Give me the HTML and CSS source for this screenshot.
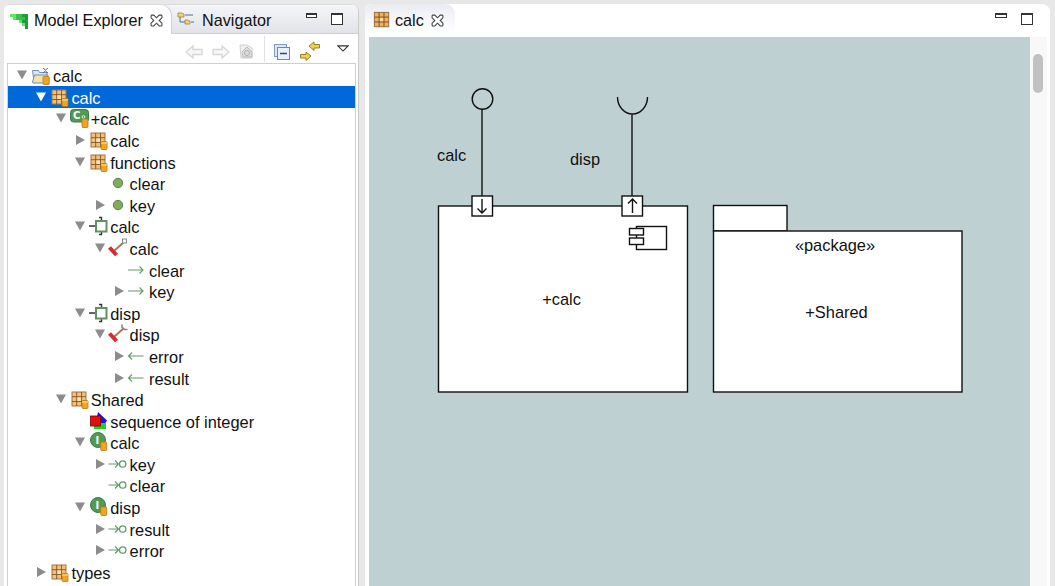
FILE: index.html
```html
<!DOCTYPE html>
<html lang="en">
<head>
<meta charset="utf-8">
<title>calc</title>
<link rel="stylesheet" href="styles.css">
</head>
<body>
<svg class="defs" width="0" height="0" aria-hidden="true">
  <defs>
    <symbol id="tri-d" viewBox="0 0 12 12"><path d="M0 1.500h10L5 10.500z" fill="#8c8c8c"/></symbol>
    <symbol id="tri-dw" viewBox="0 0 12 12"><path d="M0 1.500h10L5 10.500z" fill="#fff"/></symbol>
    <symbol id="tri-r" viewBox="0 0 12 12"><path d="M1 1v10L10 6z" fill="#8c8c8c"/></symbol>
    <symbol id="badge" viewBox="0 0 20 20"><rect x="13" y="11.500" width="6" height="8" rx="1" fill="#f2a41e" stroke="#b87810" stroke-width=".8"/><path d="M13 13h6" stroke="#ffe6a8" stroke-width="1"/></symbol>
    <symbol id="pkg" viewBox="0 0 20 20">
      <rect x="3" y="3" width="14" height="14" fill="#f4c074" stroke="#a07448" stroke-width="1"/>
      <rect x="8" y="8" width="4.200" height="4.200" fill="#fde3a8"/>
      <path d="M3 7.700h14M3 12.500h14M7.700 3v14M12.500 3v14" stroke="#7a4f2a" stroke-width="1" fill="none" opacity=".85"/>
      <use href="#badge"/>
    </symbol>
    <symbol id="pkg-plain" viewBox="0 0 20 20">
      <rect x="1.500" y="1.500" width="16" height="16" fill="#eeb25c" stroke="#96683a" stroke-width="1"/>
      <rect x="7" y="7" width="5" height="5" fill="#fbdf9e"/>
      <path d="M1.500 6.800h16M1.500 12.200h16M6.800 1.500v16M12.200 1.500v16" stroke="#7a4f2a" stroke-width="1.100" fill="none"/>
    </symbol>
    <symbol id="project" viewBox="0 0 20 20">
      <path d="M2.500 5.500h6l1 2h7.500v8.500H4z" fill="#dce6f2" stroke="#6f8fb8"/>
      <path d="M2.500 17l2-7h13.500l-2.500 8H3z" fill="#f5e3a6" stroke="#6f8fb8"/>
      <path d="M13 3l2.500 2 2.500-2M13 8l2.500-2 2.500 2" stroke="#4d6f9c" fill="none"/>
      <rect x="13" y="11.500" width="6.300" height="8" rx="1" fill="#f2a41e" stroke="#b87810" stroke-width=".8"/>
    </symbol>
    <symbol id="comp" viewBox="0 0 20 20">
      <rect x="1.500" y="1.500" width="18" height="12.500" rx="3" fill="#4f9a55" stroke="#3d7d44"/>
      <text class="ico-letter" x="4" y="11">C</text>
      <circle cx="14.500" cy="9" r="1.400" fill="none" stroke="#fff" stroke-width=".8"/>
      <rect x="13" y="11" width="6" height="8.500" rx="1" fill="#f2a41e" stroke="#b87810" stroke-width=".8"/>
    </symbol>
    <symbol id="dot" viewBox="0 0 20 20"><circle cx="10" cy="10" r="4.700" fill="#82ad56" stroke="#5c7d56" stroke-width="1"/></symbol>
    <symbol id="port" viewBox="0 0 20 20">
      <path d="M1 10h7M11 1.500h2.500v3M11 18.500h2.500v-3" stroke="#333" stroke-width="1.400" fill="none"/>
      <rect x="8" y="5" width="10.500" height="10.500" fill="#fff" stroke="#5f9163" stroke-width="2"/>
    </symbol>
    <symbol id="wrench-r" viewBox="0 0 20 20">
      <path d="M6 13L16 4" stroke="#a9795a" stroke-width="2"/>
      <rect x="14.500" y="1" width="4" height="4" fill="#fff" stroke="#888"/>
      <path d="M1.500 9.500l7 7.500" stroke="#d92c30" stroke-width="4"/>
    </symbol>
    <symbol id="wrench-d" viewBox="0 0 20 20">
      <path d="M6 13L16 4" stroke="#a9795a" stroke-width="2"/>
      <path d="M14 .5v3l2.500 2h3" stroke="#888" stroke-width="1.600" fill="none"/>
      <path d="M1.500 9.500l7 7.500" stroke="#d92c30" stroke-width="4"/>
    </symbol>
    <symbol id="arr-r" viewBox="0 0 20 20"><path d="M1 10h15M12.500 6.500L16 10l-3.500 3.500" stroke="#5f9b68" stroke-width="1.100" fill="none"/></symbol>
    <symbol id="arr-l" viewBox="0 0 20 20"><path d="M16.500 10H1.500M5 6.500L1.500 10 5 13.500" stroke="#5f9b68" stroke-width="1.100" fill="none"/></symbol>
    <symbol id="seq" viewBox="0 0 20 20">
      <path d="M10 1l9 8.500-4 6H7z" fill="#1818e0"/>
      <rect x="6" y="12" width="12" height="6" fill="#22d022"/>
      <rect x="2.500" y="5" width="10" height="10" fill="#e80c0c" stroke="#700" stroke-width=".8"/>
    </symbol>
    <symbol id="iface" viewBox="0 0 20 20">
      <circle cx="10" cy="8" r="7.500" fill="#4f9a55" stroke="#3d7d44"/>
      <text class="ico-letter" x="7.500" y="12">I</text>
      <rect x="12.700" y="10" width="6" height="8.500" rx="1" fill="#f2a41e" stroke="#b87810" stroke-width=".8"/>
    </symbol>
    <symbol id="op" viewBox="0 0 20 20"><path d="M.5 10h10M7 6.500l3.500 3.500L7 13.500" stroke="#5f9b68" stroke-width="1.100" fill="none"/><circle cx="14.700" cy="10" r="3.200" fill="#fff" stroke="#5f9b68" stroke-width="1.300"/></symbol>
  </defs>
</svg>

<section class="panel panel-left">
  <header class="tabs">
    <div class="tab tab-active">
      <svg class="tab-ico" viewBox="0 0 18 16"><path d="M0 1h6v3H0zM3 4h3v3H3zM9 7h3v3H9zM12 10h3v3h-3z" fill="#5be85b"/><path d="M6 1h6v3H6zM6 4h6v3H6zM12 4h3v3h-3z" fill="#39c24a"/><path d="M12 1h6v3h-6zM15 4h3v3h-3zM12 7h6v3h-6zM15 10h3v6h-3z" fill="#1f9a3c"/></svg>
      <span>Model Explorer</span>
      <svg class="close" viewBox="0 0 12 12"><path d="M1.500 1h2L6 3.500 8.500 1h2l.5.500v2L8.500 6 11 8.500v2l-.5.500h-2L6 8.500 3.500 11h-2l-.5-.500v-2L3.500 6 1 3.500v-2z" fill="#fff" stroke="#444" stroke-width="1"/></svg>
    </div>
    <div class="tab tab-inactive">
      <svg class="tab-ico" viewBox="0 0 18 18"><path d="M1 2h4l1 1h1v3H1z" fill="#f3d27c" stroke="#a08040" stroke-width=".8"/><path d="M8 9h3l1 1h1v3H8z" fill="#f3d27c" stroke="#a08040" stroke-width=".8"/><path d="M3 6v5h5M8 4h8M14 11h3" stroke="#4d6f9c" fill="none"/></svg>
      <span>Navigator</span>
    </div>
    <div class="win-btns">
      <span class="btn-min"></span>
      <span class="btn-max"></span>
    </div>
  </header>
  <div class="toolbar">
    <svg class="tool" viewBox="0 0 18 14"><path d="M1 7l7-6v3.500h9v5H8V13z" fill="#f7f7f7" stroke="#d6d6d6" stroke-width="1.300"/></svg>
    <svg class="tool" viewBox="0 0 18 14"><path d="M17 7l-7-6v3.500H1v5h9V13z" fill="#f7f7f7" stroke="#d6d6d6" stroke-width="1.300"/></svg>
    <svg class="tool tool-home" viewBox="0 0 15 15"><path d="M1 1h7l5 3v10H2z" fill="#eee" stroke="#d0d0d0"/><path d="M3 8l5-5 5 5v5H4z" fill="#ddd" stroke="#bdbdbd"/><circle cx="8" cy="9" r="2.500" fill="none" stroke="#b0b0b0"/></svg>
    <span class="tool-sep"></span>
    <svg class="tool tool-collapse" viewBox="0 0 16 16"><rect x=".5" y=".5" width="12" height="12" fill="#dbe7f5" stroke="#7f9bbf"/><rect x="3.500" y="3.500" width="12" height="12" fill="#e8f0fa" stroke="#6b8ab3"/><path d="M6 9.500h7" stroke="#1f4f8f" stroke-width="1.600"/></svg>
    <svg class="tool tool-link" viewBox="0 0 20 20"><path d="M9 5l5-4v2.500h5.500v3.500H14v2.500z" fill="#f3cf4a" stroke="#8a7420" stroke-width=".9"/><path d="M11 15l-5-4v2.500H.5V17H6v2.500z" fill="#f3cf4a" stroke="#8a7420" stroke-width=".9"/></svg>
    <svg class="tool-menu" viewBox="0 0 14 8"><path d="M1 1h12L7 7z" fill="#fff" stroke="#333" stroke-width="1.300"/></svg>
  </div>
  <div class="tree">
    <div class="row l0"><svg class="tog"><use href="#tri-d"/></svg><svg class="ico"><use href="#project"/></svg><span class="tight">calc</span></div>
    <div class="row l1 selected"><svg class="tog"><use href="#tri-dw"/></svg><svg class="ico"><use href="#pkg"/></svg><span>calc</span></div>
    <div class="row l2"><svg class="tog"><use href="#tri-d"/></svg><svg class="ico"><use href="#comp"/></svg><span>+calc</span></div>
    <div class="row l3"><svg class="tog"><use href="#tri-r"/></svg><svg class="ico"><use href="#pkg"/></svg><span>calc</span></div>
    <div class="row l3"><svg class="tog"><use href="#tri-d"/></svg><svg class="ico"><use href="#pkg"/></svg><span>functions</span></div>
    <div class="row l4"><span class="tog"></span><svg class="ico"><use href="#dot"/></svg><span>clear</span></div>
    <div class="row l4"><svg class="tog"><use href="#tri-r"/></svg><svg class="ico"><use href="#dot"/></svg><span>key</span></div>
    <div class="row l3"><svg class="tog"><use href="#tri-d"/></svg><svg class="ico"><use href="#port"/></svg><span>calc</span></div>
    <div class="row l4"><svg class="tog"><use href="#tri-d"/></svg><svg class="ico"><use href="#wrench-r"/></svg><span>calc</span></div>
    <div class="row l5"><span class="tog"></span><svg class="ico"><use href="#arr-r"/></svg><span>clear</span></div>
    <div class="row l5"><svg class="tog"><use href="#tri-r"/></svg><svg class="ico"><use href="#arr-r"/></svg><span>key</span></div>
    <div class="row l3"><svg class="tog"><use href="#tri-d"/></svg><svg class="ico"><use href="#port"/></svg><span>disp</span></div>
    <div class="row l4"><svg class="tog"><use href="#tri-d"/></svg><svg class="ico"><use href="#wrench-d"/></svg><span>disp</span></div>
    <div class="row l5"><svg class="tog"><use href="#tri-r"/></svg><svg class="ico"><use href="#arr-l"/></svg><span>error</span></div>
    <div class="row l5"><svg class="tog"><use href="#tri-r"/></svg><svg class="ico"><use href="#arr-l"/></svg><span>result</span></div>
    <div class="row l2"><svg class="tog"><use href="#tri-d"/></svg><svg class="ico"><use href="#pkg"/></svg><span>Shared</span></div>
    <div class="row l3"><span class="tog"></span><svg class="ico"><use href="#seq"/></svg><span>sequence of integer</span></div>
    <div class="row l3"><svg class="tog"><use href="#tri-d"/></svg><svg class="ico"><use href="#iface"/></svg><span>calc</span></div>
    <div class="row l4"><svg class="tog"><use href="#tri-r"/></svg><svg class="ico"><use href="#op"/></svg><span>key</span></div>
    <div class="row l4"><span class="tog"></span><svg class="ico"><use href="#op"/></svg><span>clear</span></div>
    <div class="row l3"><svg class="tog"><use href="#tri-d"/></svg><svg class="ico"><use href="#iface"/></svg><span>disp</span></div>
    <div class="row l4"><svg class="tog"><use href="#tri-r"/></svg><svg class="ico"><use href="#op"/></svg><span>result</span></div>
    <div class="row l4"><svg class="tog"><use href="#tri-r"/></svg><svg class="ico"><use href="#op"/></svg><span>error</span></div>
    <div class="row l1"><svg class="tog"><use href="#tri-r"/></svg><svg class="ico"><use href="#pkg"/></svg><span>types</span></div>
  </div>
</section>

<section class="panel panel-right">
  <header class="tabs tabs-editor">
    <div class="tab tab-editor">
      <svg class="tab-ico tab-ico-pkg"><use href="#pkg-plain"/></svg>
      <span>calc</span>
      <svg class="close" viewBox="0 0 12 12"><path d="M1.500 1h2L6 3.500 8.500 1h2l.5.500v2L8.500 6 11 8.500v2l-.5.500h-2L6 8.500 3.500 11h-2l-.5-.500v-2L3.500 6 1 3.500v-2z" fill="#fff" stroke="#444" stroke-width="1"/></svg>
    </div>
    <div class="win-btns win-btns-editor">
      <span class="btn-min"></span>
      <span class="btn-max"></span>
    </div>
  </header>
  <div class="editor">
    <svg class="canvas" viewBox="369 37 661 549" xmlns="http://www.w3.org/2000/svg">
      <g class="dg">
        <circle cx="482.500" cy="99" r="10.300"/>
        <path d="M482 109.500V196"/>
        <path d="M617.500 97a15 17 0 0 0 30 0"/>
        <path d="M632 114.500V196"/>
        <rect class="fill" x="438.500" y="206" width="249" height="186"/>
        <rect class="fill" x="472" y="196" width="20.500" height="20"/>
        <path d="M482 199V213M477.500 208.500L482 213l4.500-4.500"/>
        <rect class="fill" x="622" y="196" width="20.500" height="20"/>
        <path d="M632.500 213V199M628 203.500l4.500-4.500 4.500 4.500"/>
        <rect class="fill" x="636.500" y="226.500" width="30" height="23"/>
        <rect class="fill" x="629.500" y="228.500" width="14" height="6.500"/>
        <rect class="fill" x="629.500" y="238" width="14" height="6.500"/>
        <rect class="fill" x="713.500" y="205.500" width="73.500" height="25.500"/>
        <rect class="fill" x="713.500" y="231" width="248.500" height="161"/>
      </g>
      <text class="dg-text" x="437" y="161">calc</text>
      <text class="dg-text" x="570" y="165">disp</text>
      <text class="dg-text mid" x="561.500" y="305">+calc</text>
      <text class="dg-text mid" x="835" y="251">«package»</text>
      <text class="dg-text mid" x="836.500" y="318">+Shared</text>
    </svg>
    <div class="scrollbar"><span class="thumb"></span></div>
  </div>
</section>
</body>
</html>
```

FILE: styles.css
```css
* { box-sizing: border-box; }
html, body { margin: 0; height: 100%; }
body {
  width: 1055px;
  height: 586px;
  overflow: hidden;
  display: flex;
  gap: 6px;
  padding: 4px 5px 0 4px;
  background: #e8e8e8;
  font-family: "Liberation Sans", Arial, sans-serif;
  font-size: 16.4px;
  color: #111;
}
.defs { position: absolute; }
.panel {
  background: #fff;
  border-radius: 6px 8px 0 0;
  display: flex;
  flex-direction: column;
  overflow: hidden;
}
.panel-left { width: 355px; flex: none; border-right: 1px solid #c9c9c9; }
.panel-right { flex: 1; }

.tabs { height: 30px; flex: none; display: flex; }
.panel-left .tabs {
  background: linear-gradient(#f4f5f7, #e2e3e8);
  border-bottom: 1px solid #d0d0d4;
  border-top: 1px solid #dcdcdc;
}
.tab { display: flex; align-items: center; height: 30px; flex: none; font-size: 16.2px; }
.tab-active {
  width: 168px; height: 30px; margin-top: -1px; padding: 2px 0 0 6px;
  border-radius: 6px 12px 0 0; background: #fff;
  border-top: 1px solid #dcdcdc; border-right: 1px solid #d0d0d4;
}
.tab-inactive { width: 104px; height: 28px; padding: 2px 0 0 5px; }
.tab-ico { width: 18px; height: 16px; margin-right: 6px; flex: none; }
.tab-inactive .tab-ico { height: 18px; margin-right: 7px; }
.tab-ico-pkg { width: 18px; height: 18px; margin-right: 4px; }
.close { width: 13px; height: 13px; margin-left: 7px; flex: none; }
.win-btns { display: flex; align-items: flex-start; gap: 14px; margin-left: 30px; padding-top: 8px; }
.win-btns-editor { margin-left: auto; margin-right: 17px; gap: 14px; padding-top: 9px; }
.btn-min { width: 11px; height: 5px; border: 1px solid #333; border-top-width: 2px; background: #fff; }
.btn-max { width: 12px; height: 12px; border: 1px solid #333; border-top-width: 2px; background: #fff; }
.win-btns-editor .btn-min { width: 12px; }
.tab-editor {
  width: 90px; padding: 2px 0 0 8px;
  border-radius: 7px 10px 0 0;
  background: linear-gradient(#e9ebf1 0, #f5f6f9 45%, #fff 100%);
}
.tab-editor .close { margin-left: 7px; }

.toolbar { height: 29px; flex: none; display: flex; align-items: center; padding-left: 181px; gap: 9px; }
.tool { width: 18px; height: 14px; flex: none; margin-top: 6px; }
.tool-home { width: 15px; height: 15px; }
.tool-collapse { width: 16px; height: 16px; }
.tool-link { width: 20px; height: 20px; margin-left: 1px; margin-top: 5px; }
.tool-sep { width: 1px; height: 26px; background: #e2e2e2; margin: 0 0 0 1px; }
.tool-menu { width: 12px; height: 7px; margin: -1px 0 0 8px; flex: none; }

.tree {
  flex: 1;
  margin: 0 2px 0 3px;
  padding-top: .400px;
  border: 1px solid #cfcfcf;
  border-bottom: 0;
  overflow: hidden;
  background: #fff;
}
.row { display: flex; align-items: center; height: 21.6px; padding-top: 3px; white-space: nowrap; }
.l0 { padding-left: 9px; }
.l1 { padding-left: 28.400px; }
.l2 { padding-left: 47.800px; }
.l3 { padding-left: 67.200px; }
.l4 { padding-left: 86.600px; }
.l5 { padding-left: 106px; }
.tog { width: 12px; height: 12px; flex: none; margin-top: -3px; }
.ico { width: 20px; height: 20px; flex: none; margin: -3px 2px 0 1px; }
.tight { margin-left: 1px; }
.selected { background: #0068d9; color: #fff; }

.editor { flex: 1; min-height: 0; display: flex; margin: 3px 3px 0 4px; }
.canvas { width: 661px; height: 549px; background: #bfd0d3; flex: none; }
.scrollbar { width: 17px; background: #f8f8f8; padding: 17px 3px 0 3px; }
.thumb { display: block; width: 10px; height: 39px; border-radius: 5px; background: #c1c1c1; }

.dg { fill: none; stroke: #111; stroke-width: 1.400; }
.dg .fill { fill: #fff; }
.dg-text { font-family: "Liberation Sans", Arial, sans-serif; font-size: 16.4px; fill: #111; }
.mid { text-anchor: middle; }
.ico-letter { font-family: "DejaVu Sans", sans-serif; font-size: 10px; font-weight: 700; fill: #fff; }
```
